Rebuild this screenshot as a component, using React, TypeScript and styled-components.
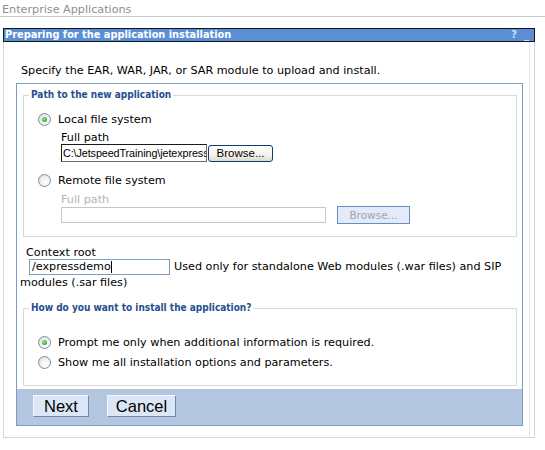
import React from 'react';
import styled, { createGlobalStyle } from 'styled-components';

const GlobalStyle = createGlobalStyle`
  body {
    margin: 0;
    background: #fff;
    font-family: "DejaVu Sans", Verdana, sans-serif;
    font-size: 11.2px;
    color: #000;
  }
`;

const PageHeader = styled.div`
  padding: 3px 0 0 2px;
  height: 13px;
  line-height: 14px;
  color: #8e8e8e;
  border-bottom: 1px solid #c9c9c9;
`;

const Frame = styled.div`
  width: 532px;
  margin: 11px 0 0 3px;
`;

const TitleBar = styled.div`
  display: flex;
  align-items: center;
  justify-content: space-between;
  height: 12px;
  border: 1px solid #161616;
  background: #5a8fd6;
  color: #fff;
  font-family: "DejaVu Sans Condensed", "DejaVu Sans", sans-serif;
  font-weight: bold;
  font-size: 10.9px;
  line-height: 12px;
  padding-left: 1px;
`;

const TitleTools = styled.div`
  display: flex;
  gap: 7px;
  padding-right: 5px;
  color: #d2e0f4;
  font-size: 11px;
`;

const Body = styled.div`
  border: 1px solid #d6d6d6;
  border-top: none;
  box-shadow: inset -4px 0 0 #fff, inset -5px 0 0 #e4e4e4;
  padding: 22px 0 11px 12px;
`;

const Intro = styled.div`
  line-height: 14px;
  margin: 0 0 5px 5px;
`;

const BlueBox = styled.div`
  width: 505px;
  border: 1px solid #7f9ac6;
`;

const Fieldset = styled.fieldset<{ $mt: number; $top: number; $bottom: number }>`
  margin: ${(p) => p.$mt}px 5px 0 6px;
  padding: ${(p) => p.$top}px 0 ${(p) => p.$bottom}px 0;
  border: 1px solid #d9d9d9;
  min-width: 0;
`;

const Legend = styled.legend`
  margin-left: 5px;
  padding: 0 2px;
  line-height: 12px;
  font-family: "DejaVu Sans Condensed", "DejaVu Sans", sans-serif;
  font-weight: bold;
  font-size: 10px;
  color: #24508e;
`;

const RadioRow = styled.div<{ $gap?: number }>`
  display: flex;
  align-items: center;
  gap: 7px;
  height: 16px;
  padding-left: 14px;
  margin-top: ${(p) => p.$gap || 0}px;
`;

const Radio = styled.span<{ $checked?: boolean }>`
  position: relative;
  flex: none;
  width: 11px;
  height: 11px;
  border-radius: 50%;
  border: 1px solid #7a8dab;
  background: radial-gradient(circle at 65% 65%, #ffffff 0%, #f2f2ee 45%, #d6d6ce 100%);

  &::after {
    content: '';
    display: ${(p) => (p.$checked ? 'block' : 'none')};
    position: absolute;
    left: 3px;
    top: 3px;
    width: 5px;
    height: 5px;
    border-radius: 50%;
    background: radial-gradient(circle at 40% 40%, #9df09d 0%, #3cbf3c 50%, #1d8f1d 100%);
  }
`;

const Indented = styled.div<{ $gap?: number }>`
  padding-left: 37px;
  margin-top: ${(p) => p.$gap || 0}px;
`;

const FieldLabel = styled.div<{ $disabled?: boolean }>`
  line-height: 12px;
  color: ${(p) => (p.$disabled ? '#b4b4b4' : '#000')};
`;

const FieldRow = styled.div`
  display: flex;
  align-items: center;
  height: 18px;
`;

const PathInput = styled.input`
  box-sizing: border-box;
  width: 146px;
  height: 18px;
  margin: 0;
  padding: 0 0 0 1px;
  border: 1px solid #6b6b6b;
  border-top-color: #1a1a1a;
  border-left-color: #1a1a1a;
  font-family: "Liberation Sans", Arial, sans-serif;
  font-size: 10.8px;
  letter-spacing: -0.1px;
  color: #000;
  background: #fff;
  outline: none;
`;

const DisabledInput = styled.input`
  box-sizing: border-box;
  width: 265px;
  height: 16px;
  margin: 0;
  border: 1px solid #c6c6c6;
  background: #fff;
`;

const BrowseButton = styled.button`
  box-sizing: border-box;
  width: 65px;
  height: 17px;
  margin: 0 0 0 1px;
  padding: 0;
  border: 1px solid #0e3c77;
  border-radius: 3px;
  background: linear-gradient(#ffffff, #f3f2ec 60%, #dcdad0);
  font-family: "Liberation Sans", Arial, sans-serif;
  font-size: 11.5px;
  color: #000;
`;

const DisabledBrowse = styled.button`
  box-sizing: border-box;
  width: 73px;
  height: 18px;
  margin: 0 0 0 11px;
  padding: 0;
  border: 1px solid #6a8cc4;
  background: #e3ebfb;
  font-family: "DejaVu Sans", Verdana, sans-serif;
  font-size: 10.5px;
  color: #a4a4a4;
`;

const ContextLabel = styled.div`
  margin: 10px 0 0 9px;
  line-height: 12px;
`;

const ContextLine = styled.p`
  margin: 0;
  padding-left: 3px;
  line-height: 16px;
`;

const TextField = styled.span`
  display: inline-flex;
  align-items: center;
  box-sizing: border-box;
  vertical-align: top;
  width: 141px;
  height: 16px;
  margin: 0 4px 0 9px;
  padding-left: 2px;
  border: 1px solid #7f9db9;
  line-height: 14px;
`;

const Caret = styled.span`
  width: 1px;
  height: 12px;
  background: #000;
`;

const ButtonBar = styled.div`
  display: flex;
  gap: 18px;
  height: 36px;
  box-sizing: border-box;
  margin-top: 3px;
  padding: 6px 0 0 16px;
  background: #b4c5e0;
`;

const ActionButton = styled.button<{ $w: number }>`
  box-sizing: border-box;
  width: ${(p) => p.$w}px;
  height: 22px;
  padding: 0;
  border: 1px solid;
  border-color: #f4f8ff #6f86ad #6f86ad #f4f8ff;
  background: #dbe6f6;
  font-family: "Liberation Sans", Arial, sans-serif;
  font-size: 16.5px;
  line-height: 20px;
  color: #000;
`;

const App: React.FC = () => {
  return (
    <>
      <GlobalStyle />
      <PageHeader>Enterprise Applications</PageHeader>
      <Frame>
        <TitleBar>
          <span>Preparing for the application installation</span>
          <TitleTools>
            <span>?</span>
            <span>_</span>
          </TitleTools>
        </TitleBar>
        <Body>
          <Intro>Specify the EAR, WAR, JAR, or SAR module to upload and install.</Intro>
          <BlueBox>
            <Fieldset $mt={5} $top={10} $bottom={12}>
              <Legend>Path to the new application</Legend>
              <RadioRow>
                <Radio $checked />
                <span>Local file system</span>
              </RadioRow>
              <Indented $gap={5}>
                <FieldLabel>Full path</FieldLabel>
                <FieldRow>
                  <PathInput readOnly value="C:\JetspeedTraining\jetexpressdemo.war" />
                  <BrowseButton>Browse...</BrowseButton>
                </FieldRow>
              </Indented>
              <RadioRow $gap={10}>
                <Radio />
                <span>Remote file system</span>
              </RadioRow>
              <Indented $gap={6}>
                <FieldLabel $disabled>Full path</FieldLabel>
                <FieldRow>
                  <DisabledInput disabled />
                  <DisabledBrowse disabled>Browse...</DisabledBrowse>
                </FieldRow>
              </Indented>
            </Fieldset>

            <ContextLabel>Context root</ContextLabel>
            <ContextLine>
              <TextField>
                /expressdemo
                <Caret />
              </TextField>
              Used only for standalone Web modules (.war files) and SIP modules (.sar files)
            </ContextLine>

            <Fieldset $mt={11} $top={20} $bottom={15}>
              <Legend>How do you want to install the application?</Legend>
              <RadioRow>
                <Radio $checked />
                <span>Prompt me only when additional information is required.</span>
              </RadioRow>
              <RadioRow $gap={4}>
                <Radio />
                <span>Show me all installation options and parameters.</span>
              </RadioRow>
            </Fieldset>

            <ButtonBar>
              <ActionButton $w={56}>Next</ActionButton>
              <ActionButton $w={69}>Cancel</ActionButton>
            </ButtonBar>
          </BlueBox>
        </Body>
      </Frame>
    </>
  );
};

export default App;
